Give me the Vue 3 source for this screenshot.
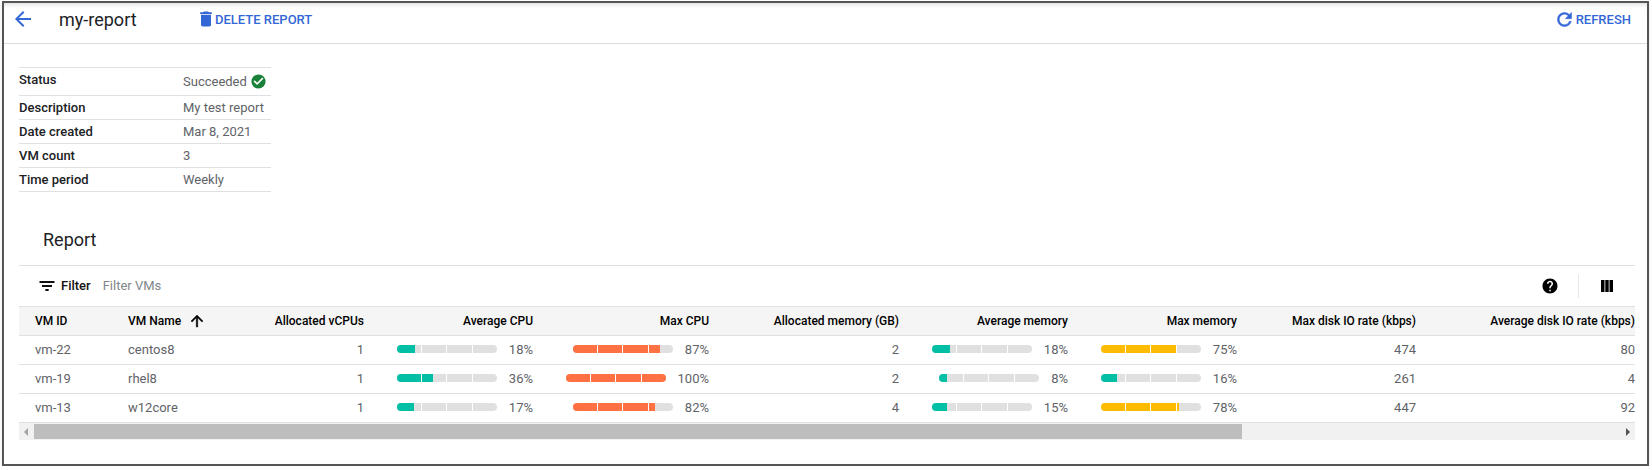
<script setup>
const columns = [
  { label: 'VM ID', cls: 'c-id' },
  { label: 'VM Name', cls: 'c-name', sort: true },
  { label: 'Allocated vCPUs', cls: 'c-vcpu num' },
  { label: 'Average CPU', cls: 'c-avgcpu num' },
  { label: 'Max CPU', cls: 'c-maxcpu num' },
  { label: 'Allocated memory (GB)', cls: 'c-mem num' },
  { label: 'Average memory', cls: 'c-avgmem num' },
  { label: 'Max memory', cls: 'c-maxmem num' },
  { label: 'Max disk IO rate (kbps)', cls: 'c-maxio num' },
  { label: 'Average disk IO rate (kbps)', cls: 'c-avgio num' }
]
const rows = [
  { id: 'vm-22', name: 'centos8', vcpu: 1, avgCpu: 18, maxCpu: 87, mem: 2, avgMem: 18, maxMem: 75, maxIo: 474, avgIo: 80 },
  { id: 'vm-19', name: 'rhel8', vcpu: 1, avgCpu: 36, maxCpu: 100, mem: 2, avgMem: 8, maxMem: 16, maxIo: 261, avgIo: 4 },
  { id: 'vm-13', name: 'w12core', vcpu: 1, avgCpu: 17, maxCpu: 82, mem: 4, avgMem: 15, maxMem: 78, maxIo: 447, avgIo: 92 }
]
const details = [
  { label: 'Description', value: 'My test report' },
  { label: 'Date created', value: 'Mar 8, 2021' },
  { label: 'VM count', value: '3' },
  { label: 'Time period', value: 'Weekly' }
]
function tone(v) {
  if (v >= 80) return 'hot'
  if (v >= 60) return 'warm'
  return 'cool'
}
</script>

<template>
  <div class="frame">
    <header class="topbar">
      <svg class="back" viewBox="0 0 24 24" width="24" height="24"><path d="M20 11H7.83l5.59-5.59L12 4l-8 8 8 8 1.41-1.41L7.83 13H20v-2z" /></svg>
      <h1 class="title">my-report</h1>
      <button class="action delete">
        <svg viewBox="0 0 24 24" width="20" height="20"><path d="M6 19c0 1.1.9 2 2 2h8c1.1 0 2-.9 2-2V7H6v12zM19 4h-3.5l-1-1h-5l-1 1H5v2h14V4z" /></svg>
        DELETE REPORT
      </button>
      <button class="action refresh">
        <svg viewBox="0 0 24 24" width="21" height="21"><path d="M17.65 6.35A7.96 7.96 0 0 0 12 4C7.58 4 4 7.58 4 12s3.58 8 8 8c3.73 0 6.84-2.55 7.73-6h-2.08A5.99 5.99 0 0 1 12 18c-3.31 0-6-2.69-6-6s2.69-6 6-6c1.66 0 3.14.69 4.22 1.78L13 11h7V4l-2.35 2.35z" /></svg>
        REFRESH
      </button>
    </header>

    <section class="details">
      <div class="detail status">
        <span class="dl">Status</span>
        <span class="dv">Succeeded
          <svg viewBox="0 0 24 24" width="17" height="17"><path fill="#188038" d="M12 2a10 10 0 1 0 0 20 10 10 0 0 0 0-20z" /><path fill="#fff" d="M10 17l-5-5 1.6-1.6 3.4 3.4 7.4-7.4L19 8l-9 9z" /></svg>
        </span>
      </div>
      <div v-for="d in details" :key="d.label" class="detail">
        <span class="dl">{{ d.label }}</span>
        <span class="dv">{{ d.value }}</span>
      </div>
    </section>

    <h2 class="report">Report</h2>

    <section class="panel">
      <div class="toolbar">
        <svg class="filter-icon" viewBox="0 0 24 24" width="20" height="20"><path d="M10 18h4v-2.4h-4V18zM3 6v2.4h18V6H3zm3 7.2h12v-2.4H6v2.4z" /></svg>
        <span class="filter-label">Filter</span>
        <span class="filter-hint">Filter VMs</span>
        <svg class="help" viewBox="0 0 24 24" width="18" height="18"><path d="M12 2C6.48 2 2 6.48 2 12s4.48 10 10 10 10-4.48 10-10S17.52 2 12 2zm1 17h-2v-2h2v2zm2.07-7.75-.9.92C13.45 12.9 13 13.5 13 15h-2v-.5c0-1.1.45-2.1 1.17-2.83l1.24-1.26c.37-.36.59-.86.59-1.41 0-1.1-.9-2-2-2s-2 .9-2 2H8c0-2.21 1.79-4 4-4s4 1.79 4 4c0 .88-.36 1.68-.93 2.25z" /></svg>
        <span class="divider"></span>
        <svg class="cols" viewBox="0 0 18 18" width="18" height="18"><path d="M3 3h3.5v12H3zM7.3 3h3.4v12H7.3zM11.5 3H15v12h-3.5z" /></svg>
      </div>

      <div class="table-wrap">
        <table>
          <thead>
            <tr>
              <th v-for="c in columns" :key="c.label" :class="c.cls">
                {{ c.label }}
                <svg v-if="c.sort" class="sort" viewBox="0 0 24 24" width="18" height="18"><path d="M4 12l1.41 1.41L11 7.83V20h2V7.83l5.58 5.59L20 12l-8-8-8 8z" /></svg>
              </th>
            </tr>
          </thead>
          <tbody>
            <tr v-for="r in rows" :key="r.id">
              <td>{{ r.id }}</td>
              <td>{{ r.name }}</td>
              <td class="num">{{ r.vcpu }}</td>
              <td v-for="m in [r.avgCpu, r.maxCpu]" :key="'c' + m" class="num">
                <div class="meter">
                  <div class="track"><div class="fill" :class="tone(m)" :style="{ width: m + '%' }"></div></div>
                  <span>{{ m }}%</span>
                </div>
              </td>
              <td class="num">{{ r.mem }}</td>
              <td v-for="m in [r.avgMem, r.maxMem]" :key="'m' + m" class="num">
                <div class="meter">
                  <div class="track"><div class="fill" :class="tone(m)" :style="{ width: m + '%' }"></div></div>
                  <span>{{ m }}%</span>
                </div>
              </td>
              <td class="num">{{ r.maxIo }}</td>
              <td class="num">{{ r.avgIo }}</td>
            </tr>
          </tbody>
        </table>
      </div>

      <div class="scrollbar">
        <span class="arrow left"></span>
        <span class="thumb"></span>
        <span class="arrow right"></span>
      </div>
    </section>
  </div>
</template>

<style>
html, body { margin: 0; background: #fff; }
</style>

<style scoped>
.frame {
  box-sizing: border-box;
  width: 1647px;
  height: 465px;
  margin-left: 2px;
  margin-top: 1px;
  background: #fff;
  border: 2px solid #555;
  box-shadow: 0 2px 3px rgba(0, 0, 0, .12);
  font-family: Roboto, "Liberation Sans", sans-serif;
  font-size: 13px;
  color: #5f6368;
  overflow: hidden;
}
.topbar {
  box-sizing: border-box;
  display: flex;
  align-items: center;
  height: 41px;
  border-bottom: 1px solid #dadce0;
  padding: 0 16px 8px 7px;
  box-shadow: inset 0 5px 4px -3px rgba(0, 0, 0, .12);
}
.back { fill: #3367d6; flex: none; }
.title {
  margin: 0 0 0 24px;
  font-size: 18px;
  font-weight: 400;
  color: #202124;
  width: 137px;
}
.action {
  display: flex;
  align-items: center;
  border: 0;
  background: none;
  padding: 0;
  font: 500 13px Roboto, sans-serif;
  color: #3367d6;
}
.action svg { fill: #3367d6; }
.delete svg { margin-right: -1px; }
.refresh { margin-left: auto; }
.refresh svg { margin-right: 1px; stroke: #3367d6; stroke-width: .6; }
.details {
  width: 252px;
  margin: 23px 0 0 15px;
  border-top: 1px solid #e0e0e0;
}
.detail {
  box-sizing: border-box;
  display: flex;
  align-items: center;
  height: 24px;
  border-bottom: 1px solid #e0e0e0;
}
.status { height: 28px; }
.status .dl { align-self: flex-start; padding-top: 4px; }
.dl { width: 164px; font-weight: 500; color: #202124; }
.dv { display: flex; align-items: center; gap: 3px; }
.report {
  margin: 36px 0 0 39px;
  font-size: 18px;
  font-weight: 400;
  color: #202124;
  line-height: 24px;
}
.panel { margin: 13px 12px 0 15px; }
.toolbar {
  display: flex;
  align-items: center;
  height: 39px;
  padding: 0 19px 1px 18px;
  border-top: 1px solid #e0e0e0;
}
.filter-icon { fill: #111; flex: none; }
.filter-label { margin-left: 4px; font-weight: 500; color: #111; }
.filter-hint { margin-left: 12px; color: #80868b; }
.help { margin-left: auto; fill: #000; }
.divider { width: 1px; height: 24px; background: #e8eaed; margin: 0 19px; }
.cols { fill: #000; }
.table-wrap { overflow: hidden; }
table {
  border-collapse: collapse;
  table-layout: fixed;
  width: 1616px;
}
th, td {
  box-sizing: border-box;
  height: 29px;
  padding: 0 16px 2px;
  text-align: left;
  white-space: nowrap;
  border-bottom: 1px solid #e0e0e0;
}
th {
  padding-bottom: 0;
  font-size: 12px;
  font-weight: 500;
  color: #000;
  background: #f5f5f5;
  border-top: 1px solid #e0e0e0;
}
.num { text-align: right; }
th:last-child, td:last-child { padding-right: 0; }
.c-id { width: 93px; }
.c-name { width: 123px; }
.c-vcpu { width: 145px; }
.c-avgcpu { width: 169px; }
.c-maxcpu { width: 176px; }
.c-mem { width: 190px; }
.c-avgmem { width: 169px; }
.c-maxmem { width: 169px; }
.c-maxio { width: 179px; }
.c-avgio { width: 203px; }
.sort { vertical-align: -5px; margin-left: 4px; fill: #000; stroke: #000; stroke-width: .6; }
.meter {
  display: flex;
  align-items: center;
  justify-content: flex-end;
  gap: 12px;
}
.track {
  position: relative;
  width: 100px;
  height: 8px;
  border-radius: 4px;
  background: #e0e0e0;
  overflow: hidden;
}
.track::after {
  content: "";
  position: absolute;
  inset: 0;
  background:
    linear-gradient(#fff, #fff) 24px 0 / 1px 100% no-repeat,
    linear-gradient(#fff, #fff) 49px 0 / 1px 100% no-repeat,
    linear-gradient(#fff, #fff) 75px 0 / 1px 100% no-repeat;
}
.fill { height: 100%; }
.cool { background: #00bfa5; }
.warm { background: #ffbb00; }
.hot { background: #ff7043; }
.scrollbar {
  display: flex;
  align-items: center;
  height: 17px;
  background: #f1f1f1;
}
.arrow { width: 0; height: 0; border-style: solid; border-color: transparent; flex: none; }
.arrow.left { margin: 0 5px; border-width: 4px 4px 4px 0; border-right-color: #a3a3a3; }
.arrow.right { margin-left: auto; margin-right: 5px; border-width: 4px 0 4px 4px; border-left-color: #505050; }
.thumb { width: 1208px; height: 15px; background: #bdbdbd; margin-left: 1px; }
</style>
